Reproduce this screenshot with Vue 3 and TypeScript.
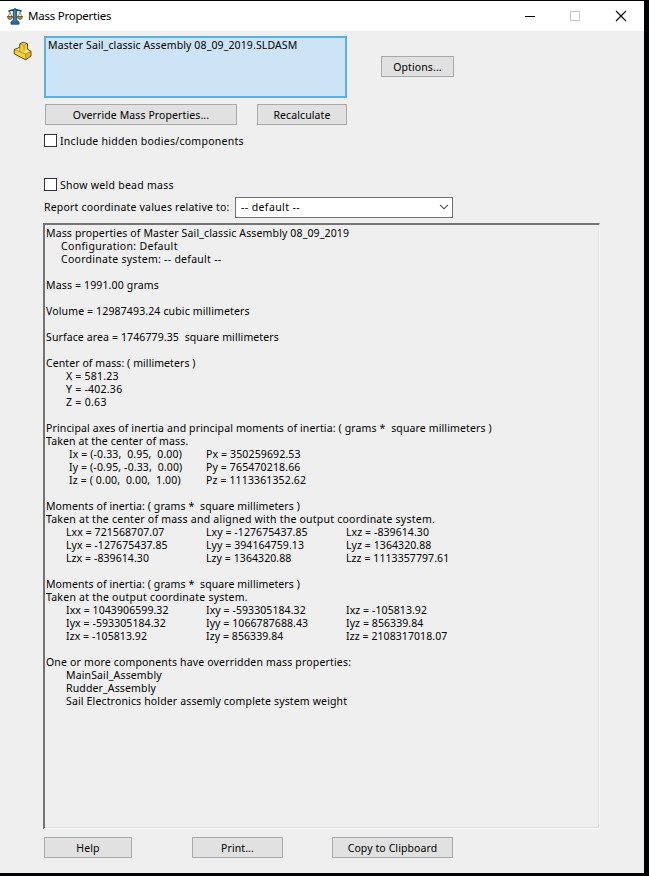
<script setup lang="ts">
import { ref } from 'vue'

interface Line {
  cells: string[]
  indent?: 'sub' | 'item' | 'axis'
  /** letter tracking in px */
  track?: number
}

const includeHidden = ref(false)
const showWeld = ref(false)

const lines: Line[] = [
  { cells: ['Mass properties of Master Sail_classic Assembly 08_09_2019'], track: 0.14 },
  { cells: ['Configuration: Default'], indent: 'sub', track: 0.32 },
  { cells: ['Coordinate system: -- default --'], indent: 'sub', track: 0.27 },
  { cells: [] },
  { cells: ['Mass = 1991.00 grams'], track: 0.15 },
  { cells: [] },
  { cells: ['Volume = 12987493.24 cubic millimeters'], track: 0.14 },
  { cells: [] },
  { cells: ['Surface area = 1746779.35  square millimeters'], track: 0.12 },
  { cells: [] },
  { cells: ['Center of mass: ( millimeters )'] },
  { cells: ['X = 581.23'], indent: 'item', track: 0.22 },
  { cells: ['Y = -402.36'], indent: 'item', track: 0.25 },
  { cells: ['Z = 0.63'], indent: 'item', track: 0.3 },
  { cells: [] },
  { cells: ['Principal axes of inertia and principal moments of inertia: ( grams *  square millimeters )'], track: 0.13 },
  { cells: ['Taken at the center of mass.'], track: 0.14 },
  { cells: ['Ix = (-0.33,  0.95,  0.00)', 'Px = 350259692.53'], indent: 'axis', track: 0.14 },
  { cells: ['Iy = (-0.95, -0.33,  0.00)', 'Py = 765470218.66'], indent: 'axis', track: 0.14 },
  { cells: ['Iz = ( 0.00,  0.00,  1.00)', 'Pz = 1113361352.62'], indent: 'axis', track: 0.14 },
  { cells: [] },
  { cells: ['Moments of inertia: ( grams *  square millimeters )'], track: 0.1 },
  { cells: ['Taken at the center of mass and aligned with the output coordinate system.'], track: 0.23 },
  { cells: ['Lxx = 721568707.07', 'Lxy = -127675437.85', 'Lxz = -839614.30'], indent: 'item' },
  { cells: ['Lyx = -127675437.85', 'Lyy = 394164759.13', 'Lyz = 1364320.88'], indent: 'item' },
  { cells: ['Lzx = -839614.30', 'Lzy = 1364320.88', 'Lzz = 1113357797.61'], indent: 'item' },
  { cells: [] },
  { cells: ['Moments of inertia: ( grams *  square millimeters )'], track: 0.1 },
  { cells: ['Taken at the output coordinate system.'], track: 0.24 },
  { cells: ['Ixx = 1043906599.32', 'Ixy = -593305184.32', 'Ixz = -105813.92'], indent: 'item' },
  { cells: ['Iyx = -593305184.32', 'Iyy = 1066787688.43', 'Iyz = 856339.84'], indent: 'item' },
  { cells: ['Izx = -105813.92', 'Izy = 856339.84', 'Izz = 2108317018.07'], indent: 'item' },
  { cells: [] },
  { cells: ['One or more components have overridden mass properties:'], track: 0.17 },
  { cells: ['MainSail_Assembly'], indent: 'item', track: 0.14 },
  { cells: ['Rudder_Assembly'], indent: 'item', track: 0.14 },
  { cells: ['Sail Electronics holder assemly complete system weight'], indent: 'item', track: 0.15 },
]
</script>

<template>
  <div class="desktop">
    <div class="window">
      <header class="titlebar">
        <svg class="scales" width="16" height="17" viewBox="0 0 16 17">
          <path d="M3 4 1 9M3 4l2 5M13 4l-2 5M13 4l2 5" stroke="#a98745" fill="none" />
          <path d="M1.500 3.500Q5 1 8 3q3-2 6.500.5" stroke="#1f4a66" stroke-width="1.800" fill="none" />
          <path d="M.3 8.500h5.400Q5 11.500 3 11.500T.3 8.500zM10.300 8.500h5.400Q15 11.500 13 11.500T10.300 8.500z" fill="#b98f4c" stroke="#54482f" stroke-width=".8" />
          <path d="M6.300 1.500Q8-.5 9.700 1.500V12l2.300 2v2.200H4V14l2.300-2z" fill="#286f9b" stroke="#17405c" stroke-width=".8" />
          <path d="M7.800 2v11" stroke="#4c92b8" />
        </svg>
        <span class="title">Mass Properties</span>
        <svg class="controls" width="104" height="12" viewBox="0 0 104 12">
          <path d="M0 6.500h10" stroke="#000" />
          <rect x="45.500" y="1.500" width="9" height="9" fill="none" stroke="#c6c6c6" />
          <path d="M91 1l10 10M101 1 91 11" stroke="#000" stroke-width="1.100" />
        </svg>
      </header>

      <main class="body">
        <section class="selection">
          <svg class="part" width="19" height="20" viewBox="0 0 19 20">
            <path d="M1.300 8.500 6.800 6.300V2.800L10 1.200l4.500 1.500v5.500l3.500 2v4.800l-5.300 3.700L1.300 13z" fill="#f7d03a" />
            <path d="m6.800 2.800 4.200 1.400 3.500-1.500L10 1.200zM1.300 8.500l5.500-2.200v4.500zM11 10.500l3.500-2.300L18 10.200l-5.300 3z" fill="#ffe676" />
            <path d="M12.700 13.200v5.500L18 15v-4.800z" fill="#eab827" />
            <path d="m6.800 2.800 4.200 1.400 3.500-1.500M11 4.200v5M6.800 6.300v4.500M1.300 8.500l11.400 4.700 5.300-3M12.700 13.200v5.500" fill="none" stroke="#9a761e" stroke-width=".7" />
            <path d="M1.300 8.500 6.800 6.300V2.800L10 1.200l4.500 1.500v5.500l3.500 2v4.800l-5.300 3.700L1.300 13z" fill="none" stroke="#5e4b16" stroke-linejoin="round" />
          </svg>
          <div class="picked">
            <div class="list">Master Sail_classic Assembly 08_09_2019.SLDASM</div>
            <div class="actions">
              <button class="btn override">Override Mass Properties...</button>
              <button class="btn recalc">Recalculate</button>
            </div>
          </div>
          <button class="btn options">Options...</button>
        </section>

        <label class="check"><input v-model="includeHidden" type="checkbox" /><span>Include hidden bodies/components</span></label>
        <label class="check weld"><input v-model="showWeld" type="checkbox" /><span>Show weld bead mass</span></label>

        <div class="relative">
          <span class="rel-label">Report coordinate values relative to:</span>
          <div class="combo">
            <span>-- default --</span>
            <svg width="10" height="6" viewBox="0 0 10 6"><path d="m1 .8 4 4 4-4" fill="none" stroke="#444" stroke-width="1.100" /></svg>
          </div>
        </div>

        <section class="report">
          <div
            v-for="(line, i) in lines"
            :key="i"
            class="line"
            :class="line.indent"
            :style="{ letterSpacing: `${line.track ?? 0.08}px` }"
          >
            <span v-for="(cell, j) in line.cells" :key="j" class="cell">{{ cell }}</span>
          </div>
        </section>

        <footer class="footer">
          <button class="btn help">Help</button>
          <button class="btn print">Print...</button>
          <button class="btn copy">Copy to Clipboard</button>
        </footer>
      </main>
    </div>
  </div>
</template>

<style>
body {
  margin: 0;
  background: #020304;
}
</style>

<style scoped>
.desktop {
  box-sizing: border-box;
  width: 649px;
  height: 876px;
  padding: 1px 5px 3px 0;
  background: #020304;
  color: #000;
  font-family: "Noto Sans", "Open Sans", sans-serif;
  font-size: 10.5px;
  letter-spacing: 0.1px;
  overflow: hidden;
}
.window {
  box-sizing: border-box;
  height: 872px;
  background: #efefef;
}
.titlebar {
  display: flex;
  align-items: center;
  height: 30px;
  padding: 0 15px 0 7px;
  background: #fff;
}
.title {
  margin-left: 5px;
  font-size: 11.5px;
  letter-spacing: -0.24px;
  line-height: 16px;
}
.controls {
  margin-left: auto;
}
.body {
  padding: 5px 0 0 43px;
}
.selection {
  display: flex;
  align-items: flex-start;
  margin-left: -30px;
}
.part {
  margin: 5px 12px 0 0;
}
.list {
  box-sizing: border-box;
  width: 303px;
  height: 62px;
  padding: 0 2px;
  border: 2px solid #5eb0e0;
  background: #cde4f7;
  letter-spacing: 0.12px;
  line-height: 14px;
}
.actions {
  display: flex;
  gap: 20px;
  margin: 6px 0 0 1px;
}
.btn {
  box-sizing: border-box;
  height: 21px;
  padding: 0;
  border: 1px solid #a9a9a9;
  border-radius: 0;
  background: #e1e1e1;
  color: #000;
  font: inherit;
  letter-spacing: inherit;
  line-height: 18px;
  white-space: nowrap;
}
.override {
  width: 192px;
}
.recalc {
  width: 90px;
}
.options {
  width: 73px;
  margin: 20px 0 0 34px;
}
.check {
  display: flex;
  align-items: center;
  height: 13px;
  margin: 9px 0 0 1px;
  letter-spacing: 0.27px;
}
.weld {
  margin-top: 31px;
}
.check input {
  appearance: none;
  box-sizing: border-box;
  width: 13px;
  height: 13px;
  margin: 0 3px 0 0;
  border: 1px solid #333;
  background: #fff;
}
.relative {
  display: flex;
  align-items: center;
  height: 21px;
  margin: 6px 0 0 1px;
}
.rel-label {
  box-sizing: border-box;
  width: 191px;
  padding-bottom: 1px;
  letter-spacing: 0.2px;
  white-space: nowrap;
}
.combo {
  box-sizing: border-box;
  display: flex;
  align-items: center;
  justify-content: space-between;
  width: 218px;
  height: 21px;
  padding: 0 3px 1px 5px;
  border: 1px solid #707070;
  background: #fff;
  letter-spacing: 0.4px;
}
.report {
  box-sizing: border-box;
  width: 557px;
  height: 606px;
  margin-top: 5px;
  padding: 2px 0 0 1px;
  border-style: solid;
  border-width: 2px 1px 1px 2px;
  border-color: #747474 #fafafa #fafafa #747474;
  box-shadow: inset -1px -1px #dedede;
}
.line {
  display: flex;
  height: 13px;
  line-height: 13px;
  white-space: pre;
}
.sub {
  padding-left: 15px;
}
.item {
  padding-left: 20px;
}
.axis {
  padding-left: 23px;
}
.item .cell {
  width: 140px;
}
.axis .cell {
  width: 137px;
}
.footer {
  display: flex;
  margin: 8px 0 0 1px;
}
.help {
  width: 88px;
}
.print {
  width: 91px;
  margin-left: 60px;
}
.copy {
  width: 121px;
  margin-left: 49px;
}
</style>
